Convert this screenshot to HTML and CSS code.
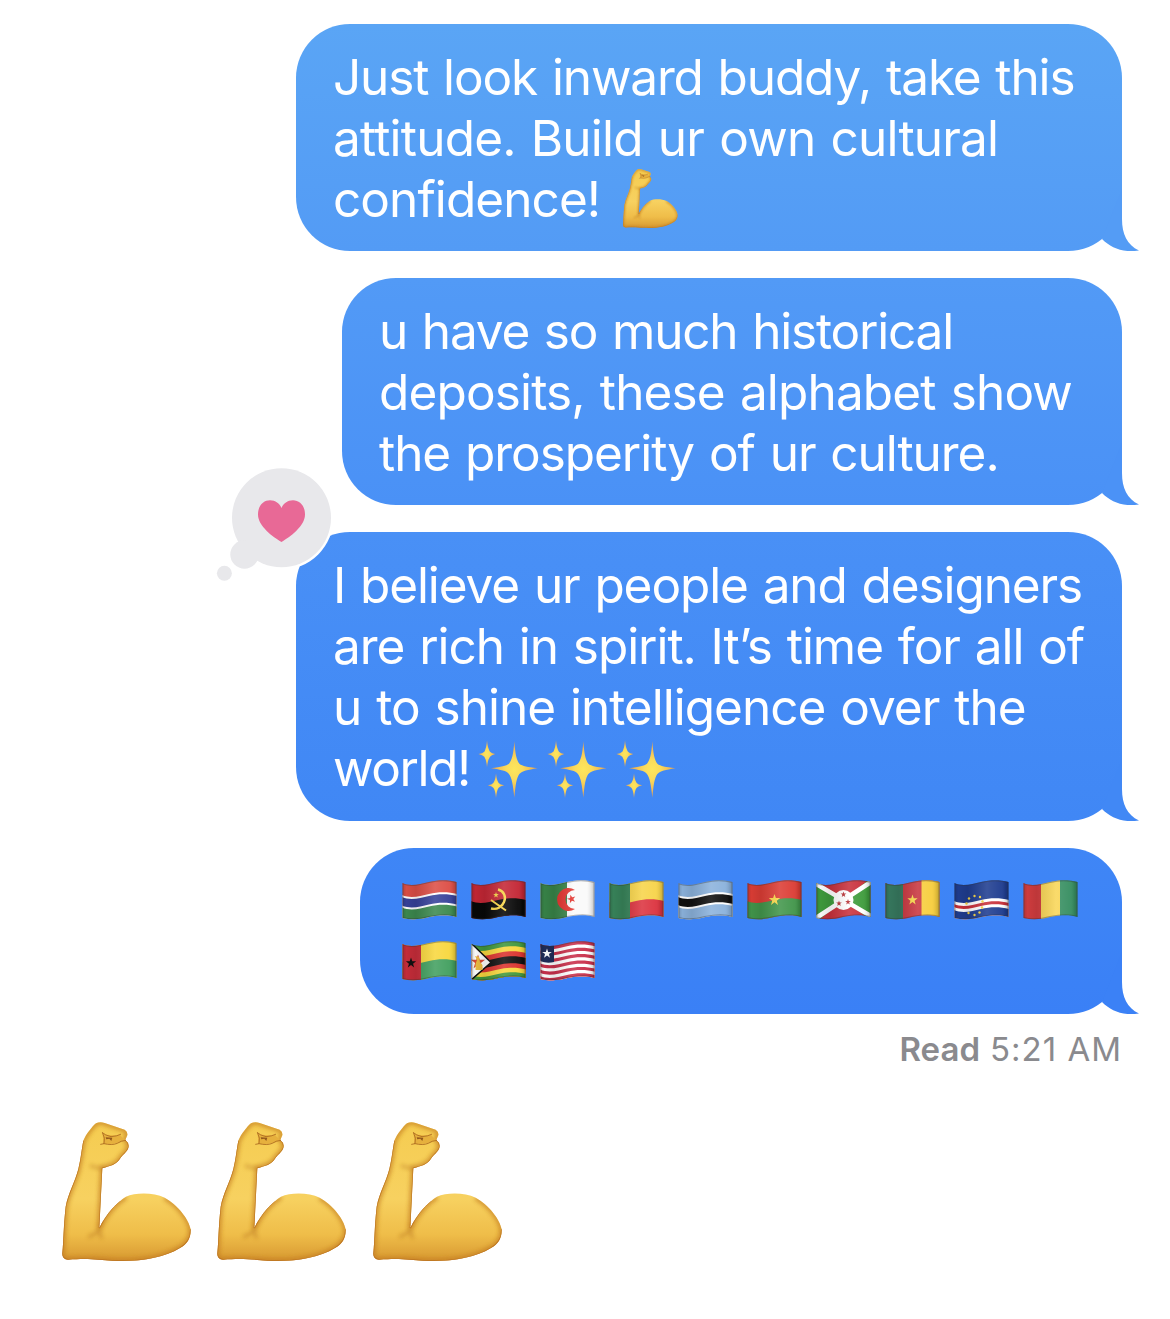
FILE: index.html
```html
<!DOCTYPE html>
<html lang="en">
<head>
<meta charset="utf-8">
<title>Messages</title>
<link rel="stylesheet" href="styles.css">
</head>
<body>
<svg class="defs" width="0" height="0" aria-hidden="true">
  <defs>
    <linearGradient id="arm-skin" x1="0" y1="0" x2="0" y2="1">
      <stop offset="0" stop-color="#f5cc50"/><stop offset=".55" stop-color="#f7d160"/><stop offset=".8" stop-color="#efbd49"/><stop offset="1" stop-color="#d5952f"/>
    </linearGradient>
    <clipPath id="arm-clip"><path d="M130 122C138 103 157 79 168 70Q180 64 194 69L254 89Q264 95 262 106L256 120Q269 130 265 144C258 161 249 161 239 178C229 194 211 198 187 205L178 384C198 341 232 306 258 290C287 277 341 277 374 293C413 314 447 358 452 388C453 413 443 431 420 444C369 475 296 486 217 482C177 480 149 474 84 479Q66 477 67 460C71 423 70 382 77 320C85 278 105 247 115 207C124 169 125 145 130 122Z"/></clipPath>
    <filter id="soft" x="-30%" y="-30%" width="160%" height="160%"><feGaussianBlur stdDeviation="7"/></filter>
    <symbol id="arm" viewBox="60 60 400 430">
      <g clip-path="url(#arm-clip)">
        <path fill="url(#arm-skin)" d="M60 60H460V490H60Z"/>
        <path fill="none" stroke="#c47d20" stroke-width="14" opacity=".75" filter="url(#soft)" d="M130 122C138 103 157 79 168 70Q180 64 194 69L254 89Q264 95 262 106L256 120Q269 130 265 144C258 161 249 161 239 178C229 194 211 198 187 205L178 384C198 341 232 306 258 290M374 293C413 314 447 358 452 388C453 413 443 431 420 444C369 475 296 486 217 482C177 480 149 474 84 479Q66 477 67 460C71 423 70 382 77 320C85 278 105 247 115 207C124 169 125 145 130 122"/>
        <path fill="none" stroke="#b16c1b" stroke-width="8" opacity=".55" filter="url(#soft)" d="M150 197Q168 205 190 204M180 378Q178 400 145 411M180 385Q176 400 186 415"/>
        <path fill="none" stroke="#b97020" stroke-width="4" opacity=".85" d="M130 122C125 145 124 169 115 207C105 247 85 278 77 320C70 382 71 423 67 460Q66 477 84 479C149 474 177 480 217 482C296 486 369 475 420 444C443 431 453 413 452 388M187 205L178 384C198 341 218 320 240 302M256 120Q269 130 265 144C258 161 249 161 239 178C229 194 211 198 187 205"/>
      </g>
      <path fill="#e6b03d" d="M188 99Q205 110 240 104L254 121Q228 136 190 131Z"/>
      <path fill="none" stroke="#a9681f" stroke-width="2.500" stroke-linejoin="round" stroke-linecap="round" d="M187 98Q195 106 213 110Q230 109 242 103M188 99Q197 115 192 131L182 133M192 131Q216 137 232 130Q243 122 257 121"/>
      <path fill="#94591c" d="M197 112L217 113L214 123L208 116L199 118Z"/>
    </symbol>
    <radialGradient id="spark-fill"><stop offset="0" stop-color="#fde65c"/><stop offset=".35" stop-color="#fadb5b"/><stop offset=".75" stop-color="#f0b955"/><stop offset="1" stop-color="#df9850"/></radialGradient>
    <symbol id="spark" viewBox="25 30 180 175">
      <g fill="url(#spark-fill)">
        <path d="M134 34C137 76 141 90 149 101C159 109 173 110 204 115C173 120 158 123 149 132C140 145 138 164 134 203C130 164 127 146 118 132C109 122 95 120 64 115C95 110 109 108 118 101C127 90 131 76 134 34Z"/>
        <path d="M52 31Q54 56 61 65Q66 70 77 72Q65 75 61 80Q54 89 52 112Q50 89 44 80Q39 75 26 72Q39 70 44 65Q50 56 52 31Z"/>
        <path d="M79 130Q81 152 87 159Q91 164 104 166Q92 169 87 173Q81 180 79 204Q77 180 71 173Q66 169 54 166Q67 164 71 159Q77 152 79 130Z"/>
      </g>
    </symbol>
    <clipPath id="flag-clip"><path d="M.5 3C9 7 18 4 27 2C37-.5 47 0 54.500 2V37C47 34.500 37 35 27 37C18 39.500 9 40 .5 38Z"/></clipPath>
    <path id="w" d="M0 0C9 4 18 1 27-1C37-3.500 47-3 55-1V45H0Z"/>
    <path id="star" d="M0-6L1.400-1.900L5.700-1.900L2.300.7L3.500 4.900L0 2.300L-3.500 4.900L-2.300.7L-5.700-1.900L-1.400-1.900Z"/>
    <linearGradient id="cloth" x1="0" y1="0" x2="1" y2="0"><stop offset="0" stop-color="#000" stop-opacity=".18"/><stop offset=".08" stop-color="#000" stop-opacity=".03"/><stop offset=".25" stop-color="#000" stop-opacity=".1"/><stop offset=".6" stop-color="#fff" stop-opacity=".12"/><stop offset=".85" stop-color="#fff" stop-opacity=".04"/><stop offset=".93" stop-color="#000" stop-opacity=".09"/><stop offset="1" stop-color="#000" stop-opacity=".25"/></linearGradient>
    <g id="shade"><path fill="url(#cloth)" d="M0 0H55V41H0Z"/><path fill="none" stroke="#333" stroke-opacity=".35" stroke-width="2" d="M.5 38C9 40 18 39.500 27 37C37 35 47 34.500 54.500 37V2C47 0 37-.5 27 2C18 4 9 7 .5 3Z"/></g>
    <symbol id="tail" viewBox="0 0 37 62"><path d="M20 0V30C20 45 25 56 37 61.500C21 64 9 59 0 50Z"/></symbol>
  </defs>
</svg>

<main class="thread">
  <section class="bubble wide tone-1">
    <p class="line l1"><span>Just look inward buddy, take this</span></p>
    <p class="line l2"><span>attitude. Build ur own cultural</span></p>
    <p class="line l3"><span>confidence!</span><svg class="arm-inline"><use href="#arm"/></svg></p>
    <svg class="tail"><use href="#tail"/></svg>
  </section>

  <section class="bubble medium tone-2">
    <p class="line l4"><span>u have so much historical</span></p>
    <p class="line l5"><span>deposits, these alphabet show</span></p>
    <p class="line l6"><span>the prosperity of ur culture.</span></p>
    <svg class="tail"><use href="#tail"/></svg>
  </section>

  <section class="bubble wide tall tone-3">
    <p class="line l7"><span>I believe ur people and designers</span></p>
    <p class="line l8"><span>are rich in spirit. It’s time for all of</span></p>
    <p class="line l9"><span>u to shine intelligence over the</span></p>
    <p class="line l10"><span>world!</span><span class="sparks"><svg><use href="#spark"/></svg><svg><use href="#spark"/></svg><svg><use href="#spark"/></svg></span></p>
    <svg class="tail"><use href="#tail"/></svg>
    <svg class="tapback" viewBox="214 464 122 120">
      <circle cx="281.500" cy="517.700" r="52" fill="#fff"/>
      <g fill="#e8e8eb"><circle cx="281.500" cy="517.700" r="49.500"/><circle cx="244.500" cy="554.500" r="14.200"/><circle cx="224.400" cy="573.200" r="7.500"/></g>
      <path fill="#e86996" d="M281.500 542C273 537 258 526 258 514.500C258 505 264 500.300 270 500.300C275.500 500.300 279.500 503.500 281.500 508C283.500 503.500 287.500 500.300 293 500.300C299.500 500.300 305 505.500 305 514.500C305 526 290 537 281.500 542Z"/>
    </svg>
  </section>

  <section class="bubble flags tone-4">
    <svg viewBox="0 0 55 41"><g clip-path="url(#flag-clip)"><path fill="#dd4f46" d="M0 0H55V41H0Z"/><use href="#w" y="15" fill="#fff"/><use href="#w" y="17" fill="#37429a"/><use href="#w" y="25.500" fill="#fff"/><use href="#w" y="27.500" fill="#3d8a4f"/><use href="#shade"/></g></svg>
    <svg viewBox="0 0 55 41"><g clip-path="url(#flag-clip)"><path fill="#c42735" d="M0 0H55V41H0Z"/><use href="#w" y="21" fill="#080808"/><path fill="none" stroke="#f7d548" stroke-width="2.400" d="M27 9.500C33 11 35.500 17 33 22C31 27 26 30 20 28.500"/><path fill="none" stroke="#f7d548" stroke-width="2" d="M20 20Q27 25 35 30.500"/><use href="#star" transform="translate(25 15) scale(.5)" fill="#f7d548"/><use href="#shade"/></g></svg>
    <svg viewBox="0 0 55 41"><g clip-path="url(#flag-clip)"><path fill="#fafafa" d="M0 0H55V41H0Z"/><path fill="#388448" d="M0 0H27V41H0Z"/><path fill="#e3342f" d="M35 10A11.500 11.500 0 1 0 35 29A9.200 9.200 0 1 1 35 10Z"/><use href="#star" transform="translate(31.500 19) rotate(-15) scale(.75)" fill="#e3342f"/><use href="#shade"/></g></svg>
    <svg viewBox="0 0 55 41"><g clip-path="url(#flag-clip)"><path fill="#f7d44a" d="M0 0H55V41H0Z"/><use href="#w" y="22" fill="#dc3440"/><path fill="#38845a" d="M0 0H21V41H0Z"/><use href="#shade"/></g></svg>
    <svg viewBox="0 0 55 41"><g clip-path="url(#flag-clip)"><path fill="#8bb2dc" d="M0 0H55V41H0Z"/><use href="#w" y="15" fill="#fff"/><use href="#w" y="17" fill="#101010"/><use href="#w" y="25" fill="#fff"/><use href="#w" y="27" fill="#8bb2dc"/><use href="#shade"/></g></svg>
    <svg viewBox="0 0 55 41"><g clip-path="url(#flag-clip)"><path fill="#dc3d35" d="M0 0H55V41H0Z"/><use href="#w" y="21" fill="#42964b"/><use href="#star" x="27.500" y="20" fill="#f9d94b"/><use href="#shade"/></g></svg>
    <svg viewBox="0 0 55 41"><g clip-path="url(#flag-clip)"><path fill="#c9313c" d="M0 0H55V41H0Z"/><path fill="#3f9c3d" d="M0 0L27 21L0 42ZM55-2L27 20L55 40Z"/><path stroke="#fff" stroke-width="4.500" d="M0 4L55 36M0 38L55 2"/><circle cx="27.500" cy="20" r="10" fill="#fff"/><g fill="#b83135"><use href="#star" transform="translate(27.500 14.500) scale(.5)"/><use href="#star" transform="translate(23 23.500) scale(.5)"/><use href="#star" transform="translate(32 22) scale(.5)"/></g><use href="#shade"/></g></svg>
    <svg viewBox="0 0 55 41"><g clip-path="url(#flag-clip)"><path fill="#c93740" d="M0 0H55V41H0Z"/><path fill="#37795f" d="M0 0H18V41H0Z"/><path fill="#f7ce3e" d="M36.500 0H55V41H36.500Z"/><use href="#star" transform="translate(27.500 20) scale(.9)" fill="#f9da4b"/><use href="#shade"/></g></svg>
    <svg viewBox="0 0 55 41"><g clip-path="url(#flag-clip)"><path fill="#1f3d90" d="M0 0H55V41H0Z"/><use href="#w" y="21" fill="#fff"/><use href="#w" y="24" fill="#c9303a"/><use href="#w" y="27" fill="#fff"/><use href="#w" y="30" fill="#1f3d90"/><g fill="#f4d341"><circle cx="20.500" cy="16" r="1.200"/><circle cx="15" cy="18.500" r="1.200"/><circle cx="26" cy="17" r="1.200"/><circle cx="12.500" cy="23.500" r="1.200"/><circle cx="28.500" cy="21.500" r="1.200"/><circle cx="28" cy="27.500" r="1.200"/><circle cx="14.500" cy="33" r="1.200"/><circle cx="20.500" cy="35" r="1.200"/><circle cx="25.500" cy="32.500" r="1.200"/></g><use href="#shade"/></g></svg>
    <svg viewBox="0 0 55 41"><g clip-path="url(#flag-clip)"><path fill="#d33d3f" d="M0 0H18V41H0Z"/><path fill="#f9d657" d="M18 0H37V41H18Z"/><path fill="#388f62" d="M37 0H55V41H37Z"/><use href="#shade"/></g></svg>
    <svg viewBox="0 0 55 41"><g clip-path="url(#flag-clip)"><path fill="#f8d73e" d="M0 0H55V41H0Z"/><use href="#w" y="21" fill="#43a060"/><path fill="#c82d3a" d="M0 0H19V41H0Z"/><use href="#star" transform="translate(9 22) scale(.9)" fill="#111"/><use href="#shade"/></g></svg>
    <svg viewBox="0 0 55 41"><g clip-path="url(#flag-clip)"><path fill="#41983d" d="M0 0H55V41H0Z"/><use href="#w" y="8" fill="#f8d73e"/><use href="#w" y="13" fill="#db342f"/><use href="#w" y="18" fill="#111"/><use href="#w" y="25" fill="#db342f"/><use href="#w" y="29.500" fill="#f8d73e"/><use href="#w" y="34" fill="#41983d"/><path fill="#fff" stroke="#111" stroke-width="1.500" d="M-1 1L20 21.500L-1 40Z"/><use href="#star" transform="translate(7 21) scale(1.250)" fill="#db4a34"/><path fill="#edbd40" d="M4 15L8 16L9 21L11.500 24V29H4.500V23L6 19Z"/><use href="#shade"/></g></svg>
    <svg viewBox="0 0 55 41"><g clip-path="url(#flag-clip)"><path fill="#c9304b" d="M0 0H55V41H0Z"/><use href="#w" y="6.200" fill="#fff"/><use href="#w" y="9.400" fill="#c9304b"/><use href="#w" y="12.600" fill="#fff"/><use href="#w" y="15.800" fill="#c9304b"/><use href="#w" y="19" fill="#fff"/><use href="#w" y="22.200" fill="#c9304b"/><use href="#w" y="25.400" fill="#fff"/><use href="#w" y="28.600" fill="#c9304b"/><use href="#w" y="31.800" fill="#fff"/><use href="#w" y="35" fill="#c9304b"/><path fill="#202d5b" d="M0 0H14V21Q7 23 0 20Z"/><use href="#star" transform="translate(7 12.500) scale(.85)" fill="#fff"/><use href="#shade"/></g></svg>
    <svg class="tail"><use href="#tail"/></svg>
  </section>

  <p class="receipt"><b>Read</b> <span>5:21 AM</span></p>
  <div class="reply"><svg><use href="#arm"/></svg><svg><use href="#arm"/></svg><svg><use href="#arm"/></svg></div>
</main>
</body>
</html>
```
FILE: styles.css
```css
body { margin: 0; background: #fff; font-family: Inter, "Liberation Sans", sans-serif; }
p { margin: 0; }
.defs { position: absolute; }
.thread { display: flex; flex-direction: column; align-items: flex-end; gap: 27px; width: 1122px; padding-top: 24px; }
.bubble { position: relative; box-sizing: border-box; height: 227px; padding: 23px 37px 21px; border-radius: 54px; color: #fff; font-size: 49.500px; line-height: 61px; white-space: nowrap; word-spacing: 2px; }
.wide { width: 826px; }
.medium { width: 780px; }
.tall { height: 289px; }
.line { display: flex; height: 61px; }
.l1 { letter-spacing: -1.130px; }
.l2 { letter-spacing: -.800px; }
.l3 { letter-spacing: -.920px; }
.l4 { letter-spacing: -1.190px; }
.l5 { letter-spacing: -.850px; }
.l6 { letter-spacing: -1.050px; }
.l7 { letter-spacing: -1.100px; }
.l8 { letter-spacing: -1.050px; }
.l9 { letter-spacing: -1px; }
.l10 { letter-spacing: -1.400px; }
.tone-1 { background: linear-gradient(#5aa5f5, #539bf5); --end: #549cf5; }
.tone-2 { background: linear-gradient(#529af6, #4a91f6); --end: #4b92f6; }
.tone-3 { background: linear-gradient(#4990f6, #4087f5); --end: #4188f5; }
.tone-4 { background: linear-gradient(#3f86f6, #3a80f6); --end: #3b81f6; }
.tail { position: absolute; right: -17px; bottom: 0; width: 37px; height: 62px; fill: var(--end); }
.arm-inline { width: 56.800px; height: 61px; margin: -1px 0 0 21.400px; }
.sparks { display: flex; gap: 9px; margin: 2px 0 0 8.500px; }
.sparks svg { width: 60px; height: 58.300px; }
.tapback { position: absolute; left: -82px; top: -68px; width: 122px; height: 120px; }
.flags { display: grid; grid-template-columns: repeat(10, 55px); grid-auto-rows: 41px; gap: 20px 14px; width: 762px; height: 166px; padding: 32px 0 0 42px; align-content: start; }
.flags > svg:not(.tail) { width: 55px; height: 41px; }
.receipt { margin-top: -12px; color: #8a8a8e; font-size: 33px; line-height: 40px; display: flex; gap: 10px; }
.receipt b { font-weight: 600; }
.receipt span { letter-spacing: 1px; }
.reply { align-self: flex-start; display: flex; gap: 22.700px; margin: 24px 0 0 59.500px; }
.reply svg { width: 133.300px; height: 143.300px; }
```
